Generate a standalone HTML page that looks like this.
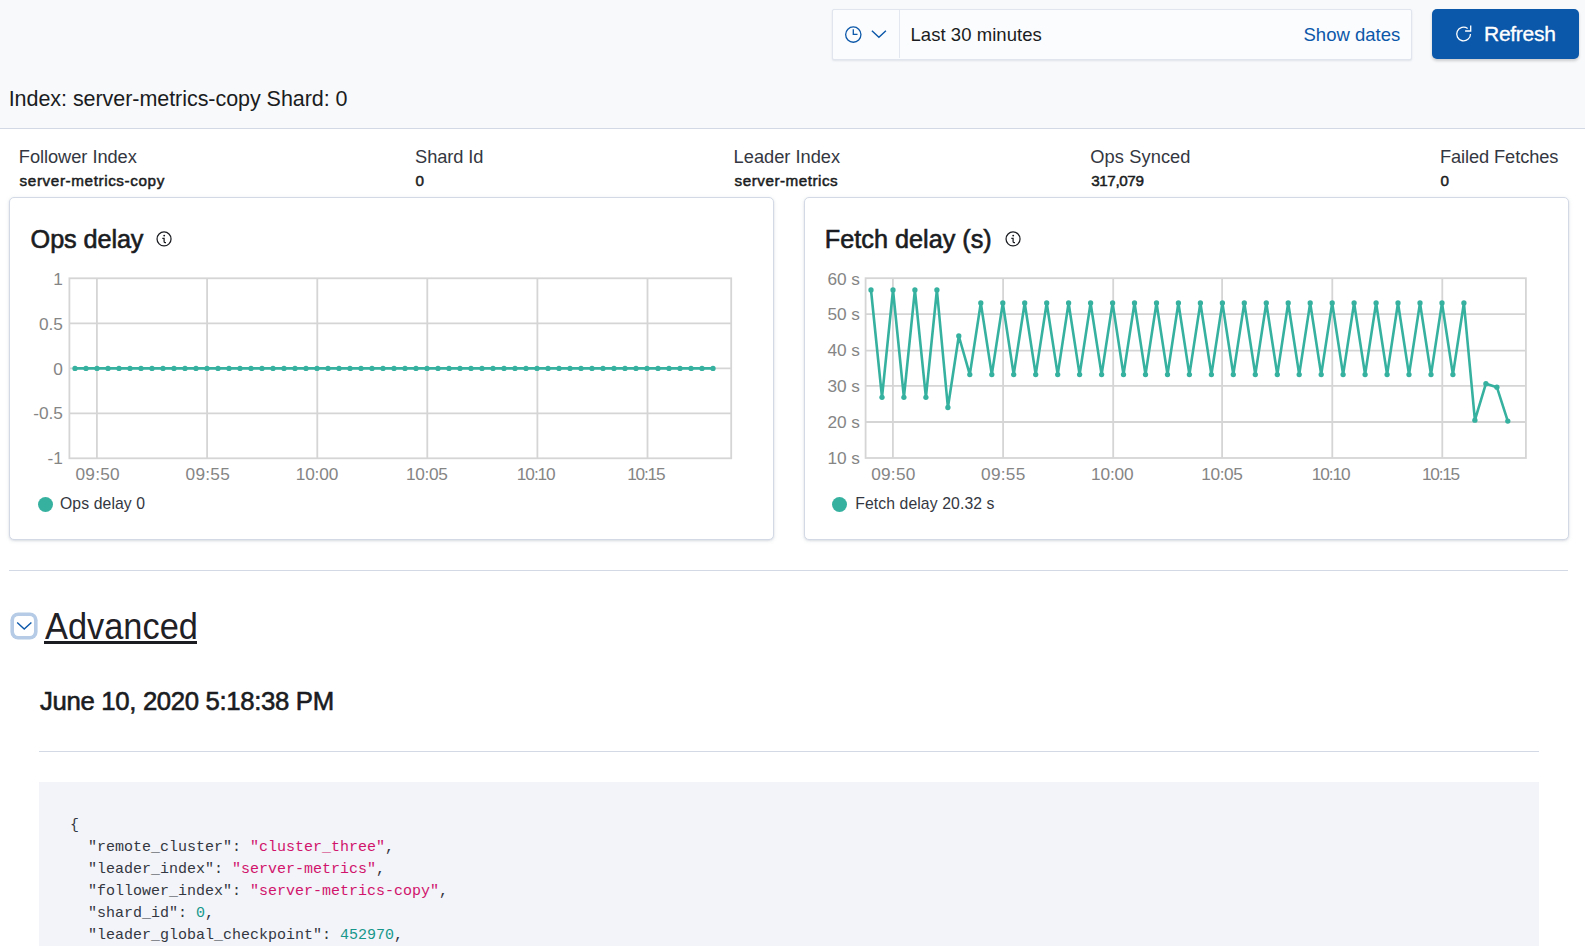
<!DOCTYPE html>
<html><head><meta charset="utf-8"><title>Follower shard</title>
<style>
html,body{margin:0;padding:0}
body{width:1585px;height:946px;overflow:hidden;position:relative;background:#fff;font-family:"Liberation Sans",sans-serif;}
.t{position:absolute;white-space:pre;line-height:1;font-family:"Liberation Sans",sans-serif}
</style></head><body>
<div style="position:absolute;left:0;top:0;width:1585px;height:128px;background:#F8F9FB;border-bottom:1px solid #D3DAE6"></div>
<div style="position:absolute;left:832px;top:9px;width:578px;height:48.5px;background:#FBFCFD;border:1px solid #E0E5EE;border-radius:2px;box-shadow:0 1px 2px rgba(152,162,179,.25)"></div>
<div style="position:absolute;left:899px;top:10px;width:1px;height:48px;background:#E3E7EF"></div>
<svg style="position:absolute;left:843px;top:24px" width="20" height="20" viewBox="0 0 20 20"><circle cx="10.3" cy="10.6" r="7.65" fill="none" stroke="#0B57A9" stroke-width="1.3"/><path d="M10.3 5.3 V10.4 H14.5" fill="none" stroke="#0B57A9" stroke-width="1.3"/></svg>
<svg style="position:absolute;left:869px;top:26px" width="20" height="16" viewBox="0 0 20 16"><path d="M2.9 4.8 L9.9 11.2 L16.9 4.8" fill="none" stroke="#0B57A9" stroke-width="1.4"/></svg>
<div class="t" style="left:910.5px;top:26.0px;font-size:18.5px;font-weight:400;letter-spacing:0.05px;color:#1A1C21;">Last 30 minutes</div>
<div class="t" style="left:1303.5px;top:26.0px;font-size:18.5px;font-weight:400;letter-spacing:0.0px;color:#0B57A9;">Show dates</div>
<div style="position:absolute;left:1432px;top:9px;width:147px;height:50px;background:#0B57A9;border-radius:5px;box-shadow:0 2px 3px rgba(0,0,0,.18)"></div>
<svg style="position:absolute;left:1453px;top:23px" width="22" height="22" viewBox="0 0 22 22"><path d="M14.66 5.42 A6.9 6.9 0 1 0 17.5 11.0" fill="none" stroke="#fff" stroke-width="1.3"/><path d="M17.7 2.5 V8.0 H12.1" fill="none" stroke="#fff" stroke-width="1.3"/></svg>
<div class="t" style="left:1484.1px;top:23.0px;font-size:21.0px;font-weight:400;letter-spacing:-0.3px;color:#fff;-webkit-text-stroke:0.35px #fff;">Refresh</div>
<div class="t" style="left:8.7px;top:89.0px;font-size:21.5px;font-weight:400;letter-spacing:-0.05px;color:#1A1C21;">Index: server-metrics-copy Shard: 0</div>
<div class="t" style="left:18.8px;top:148.0px;font-size:18.25px;font-weight:400;letter-spacing:-0.05px;color:#343741;">Follower Index</div>
<div class="t" style="left:415.1px;top:148.0px;font-size:18.25px;font-weight:400;letter-spacing:-0.1px;color:#343741;">Shard Id</div>
<div class="t" style="left:733.6px;top:148.0px;font-size:18.25px;font-weight:400;letter-spacing:0.0px;color:#343741;">Leader Index</div>
<div class="t" style="left:1090.2px;top:148.0px;font-size:18.25px;font-weight:400;letter-spacing:0.1px;color:#343741;">Ops Synced</div>
<div class="t" style="left:1440.0px;top:148.0px;font-size:18.25px;font-weight:400;letter-spacing:-0.1px;color:#343741;">Failed Fetches</div>
<div class="t" style="left:19.6px;top:173.0px;font-size:15.25px;font-weight:400;letter-spacing:0.6px;color:#1A1C21;-webkit-text-stroke:0.5px #1A1C21;">server-metrics-copy</div>
<div class="t" style="left:415.6px;top:173.0px;font-size:15.25px;font-weight:400;letter-spacing:-0.4px;color:#1A1C21;-webkit-text-stroke:0.5px #1A1C21;">0</div>
<div class="t" style="left:734.6px;top:173.0px;font-size:15.25px;font-weight:400;letter-spacing:0.5px;color:#1A1C21;-webkit-text-stroke:0.5px #1A1C21;">server-metrics</div>
<div class="t" style="left:1091.2px;top:173.0px;font-size:15.25px;font-weight:400;letter-spacing:-0.4px;color:#1A1C21;-webkit-text-stroke:0.5px #1A1C21;">317,079</div>
<div class="t" style="left:1440.5px;top:173.0px;font-size:15.25px;font-weight:400;letter-spacing:-0.4px;color:#1A1C21;-webkit-text-stroke:0.5px #1A1C21;">0</div>
<div style="position:absolute;left:9px;top:197px;width:763px;height:341px;border:1px solid #D3DAE6;border-radius:5px;background:#fff;box-shadow:0 1px 2px rgba(152,162,179,.25),0 1px 4px rgba(152,162,179,.18)"></div>
<div style="position:absolute;left:804px;top:197px;width:763px;height:341px;border:1px solid #D3DAE6;border-radius:5px;background:#fff;box-shadow:0 1px 2px rgba(152,162,179,.25),0 1px 4px rgba(152,162,179,.18)"></div>
<div class="t" style="left:30.6px;top:226.8px;font-size:25.25px;font-weight:400;letter-spacing:-0.1px;color:#1A1C21;-webkit-text-stroke:0.6px #1A1C21;">Ops delay</div>
<div class="t" style="left:824.8px;top:226.8px;font-size:25.25px;font-weight:400;letter-spacing:0.0px;color:#1A1C21;-webkit-text-stroke:0.6px #1A1C21;">Fetch delay (s)</div>
<svg style="position:absolute;left:155px;top:230px" width="18" height="18" viewBox="0 0 18 18"><circle cx="9.05" cy="8.9" r="7.0" fill="none" stroke="#1A1C21" stroke-width="1.25"/><circle cx="9.2" cy="5.6" r="0.95" fill="#1A1C21"/><path d="M7.3 8.4 H9.1 V11.6 Q9.1 12.5 10 12.5 H11" fill="none" stroke="#1A1C21" stroke-width="1.25"/></svg>
<svg style="position:absolute;left:1004px;top:230px" width="18" height="18" viewBox="0 0 18 18"><circle cx="9.05" cy="8.9" r="7.0" fill="none" stroke="#1A1C21" stroke-width="1.25"/><circle cx="9.2" cy="5.6" r="0.95" fill="#1A1C21"/><path d="M7.3 8.4 H9.1 V11.6 Q9.1 12.5 10 12.5 H11" fill="none" stroke="#1A1C21" stroke-width="1.25"/></svg>
<svg style="position:absolute;left:0;top:0" width="1585" height="946" viewBox="0 0 1585 946"><path d="M69.4 323.3 H731.2 M69.4 368.3 H731.2 M69.4 413.3 H731.2 M96.9 278.3 V458.3 M207.1 278.3 V458.3 M317.3 278.3 V458.3 M427.3 278.3 V458.3 M537.4 278.3 V458.3 M647.5 278.3 V458.3 " stroke="#D5D5D5" stroke-width="1.8" fill="none"/><rect x="69.4" y="278.3" width="661.8000000000001" height="180.0" stroke="#D5D5D5" stroke-width="1.8" fill="none"/><path d="M75.0 368.4 L86.0 368.4 L97.0 368.4 L108.0 368.4 L119.0 368.4 L130.0 368.4 L141.0 368.4 L152.0 368.4 L163.0 368.4 L174.0 368.4 L185.0 368.4 L196.0 368.4 L207.0 368.4 L218.0 368.4 L229.0 368.4 L240.0 368.4 L251.0 368.4 L262.0 368.4 L273.0 368.4 L284.0 368.4 L295.0 368.4 L306.0 368.4 L317.0 368.4 L328.0 368.4 L339.0 368.4 L350.0 368.4 L361.0 368.4 L372.0 368.4 L383.0 368.4 L394.0 368.4 L405.0 368.4 L416.0 368.4 L427.0 368.4 L438.0 368.4 L449.0 368.4 L460.0 368.4 L471.0 368.4 L482.0 368.4 L493.0 368.4 L504.0 368.4 L515.0 368.4 L526.0 368.4 L537.0 368.4 L548.0 368.4 L559.0 368.4 L570.0 368.4 L581.0 368.4 L592.0 368.4 L603.0 368.4 L614.0 368.4 L625.0 368.4 L636.0 368.4 L647.0 368.4 L658.0 368.4 L669.0 368.4 L680.0 368.4 L691.0 368.4 L702.0 368.4 L713.0 368.4" stroke="#36B1A0" stroke-width="2.6" fill="none" stroke-linejoin="miter"/><circle cx="75.0" cy="368.4" r="2.65" fill="#36B1A0"/><circle cx="86.0" cy="368.4" r="2.65" fill="#36B1A0"/><circle cx="97.0" cy="368.4" r="2.65" fill="#36B1A0"/><circle cx="108.0" cy="368.4" r="2.65" fill="#36B1A0"/><circle cx="119.0" cy="368.4" r="2.65" fill="#36B1A0"/><circle cx="130.0" cy="368.4" r="2.65" fill="#36B1A0"/><circle cx="141.0" cy="368.4" r="2.65" fill="#36B1A0"/><circle cx="152.0" cy="368.4" r="2.65" fill="#36B1A0"/><circle cx="163.0" cy="368.4" r="2.65" fill="#36B1A0"/><circle cx="174.0" cy="368.4" r="2.65" fill="#36B1A0"/><circle cx="185.0" cy="368.4" r="2.65" fill="#36B1A0"/><circle cx="196.0" cy="368.4" r="2.65" fill="#36B1A0"/><circle cx="207.0" cy="368.4" r="2.65" fill="#36B1A0"/><circle cx="218.0" cy="368.4" r="2.65" fill="#36B1A0"/><circle cx="229.0" cy="368.4" r="2.65" fill="#36B1A0"/><circle cx="240.0" cy="368.4" r="2.65" fill="#36B1A0"/><circle cx="251.0" cy="368.4" r="2.65" fill="#36B1A0"/><circle cx="262.0" cy="368.4" r="2.65" fill="#36B1A0"/><circle cx="273.0" cy="368.4" r="2.65" fill="#36B1A0"/><circle cx="284.0" cy="368.4" r="2.65" fill="#36B1A0"/><circle cx="295.0" cy="368.4" r="2.65" fill="#36B1A0"/><circle cx="306.0" cy="368.4" r="2.65" fill="#36B1A0"/><circle cx="317.0" cy="368.4" r="2.65" fill="#36B1A0"/><circle cx="328.0" cy="368.4" r="2.65" fill="#36B1A0"/><circle cx="339.0" cy="368.4" r="2.65" fill="#36B1A0"/><circle cx="350.0" cy="368.4" r="2.65" fill="#36B1A0"/><circle cx="361.0" cy="368.4" r="2.65" fill="#36B1A0"/><circle cx="372.0" cy="368.4" r="2.65" fill="#36B1A0"/><circle cx="383.0" cy="368.4" r="2.65" fill="#36B1A0"/><circle cx="394.0" cy="368.4" r="2.65" fill="#36B1A0"/><circle cx="405.0" cy="368.4" r="2.65" fill="#36B1A0"/><circle cx="416.0" cy="368.4" r="2.65" fill="#36B1A0"/><circle cx="427.0" cy="368.4" r="2.65" fill="#36B1A0"/><circle cx="438.0" cy="368.4" r="2.65" fill="#36B1A0"/><circle cx="449.0" cy="368.4" r="2.65" fill="#36B1A0"/><circle cx="460.0" cy="368.4" r="2.65" fill="#36B1A0"/><circle cx="471.0" cy="368.4" r="2.65" fill="#36B1A0"/><circle cx="482.0" cy="368.4" r="2.65" fill="#36B1A0"/><circle cx="493.0" cy="368.4" r="2.65" fill="#36B1A0"/><circle cx="504.0" cy="368.4" r="2.65" fill="#36B1A0"/><circle cx="515.0" cy="368.4" r="2.65" fill="#36B1A0"/><circle cx="526.0" cy="368.4" r="2.65" fill="#36B1A0"/><circle cx="537.0" cy="368.4" r="2.65" fill="#36B1A0"/><circle cx="548.0" cy="368.4" r="2.65" fill="#36B1A0"/><circle cx="559.0" cy="368.4" r="2.65" fill="#36B1A0"/><circle cx="570.0" cy="368.4" r="2.65" fill="#36B1A0"/><circle cx="581.0" cy="368.4" r="2.65" fill="#36B1A0"/><circle cx="592.0" cy="368.4" r="2.65" fill="#36B1A0"/><circle cx="603.0" cy="368.4" r="2.65" fill="#36B1A0"/><circle cx="614.0" cy="368.4" r="2.65" fill="#36B1A0"/><circle cx="625.0" cy="368.4" r="2.65" fill="#36B1A0"/><circle cx="636.0" cy="368.4" r="2.65" fill="#36B1A0"/><circle cx="647.0" cy="368.4" r="2.65" fill="#36B1A0"/><circle cx="658.0" cy="368.4" r="2.65" fill="#36B1A0"/><circle cx="669.0" cy="368.4" r="2.65" fill="#36B1A0"/><circle cx="680.0" cy="368.4" r="2.65" fill="#36B1A0"/><circle cx="691.0" cy="368.4" r="2.65" fill="#36B1A0"/><circle cx="702.0" cy="368.4" r="2.65" fill="#36B1A0"/><circle cx="713.0" cy="368.4" r="2.65" fill="#36B1A0"/></svg>
<svg style="position:absolute;left:0;top:0" width="1585" height="946" viewBox="0 0 1585 946"><path d="M865.6 314.2 H1525.9 M865.6 350.6 H1525.9 M865.6 385.8 H1525.9 M865.6 422.0 H1525.9 M892.9 278.2 V458.0 M1003.1 278.2 V458.0 M1113.2 278.2 V458.0 M1222.1 278.2 V458.0 M1332.3 278.2 V458.0 M1442.3 278.2 V458.0 " stroke="#D5D5D5" stroke-width="1.8" fill="none"/><rect x="865.6" y="278.2" width="660.3000000000001" height="179.8" stroke="#D5D5D5" stroke-width="1.8" fill="none"/><path d="M871.0 290.0 L882.0 397.3 L893.0 290.0 L903.9 397.3 L914.9 290.0 L925.9 397.3 L936.9 290.0 L947.9 407.5 L958.8 336.0 L969.8 374.6 L980.8 303.0 L991.8 374.6 L1002.8 303.0 L1013.7 374.6 L1024.7 303.0 L1035.7 374.6 L1046.7 303.0 L1057.7 374.6 L1068.6 303.0 L1079.6 374.6 L1090.6 303.0 L1101.6 374.6 L1112.6 303.0 L1123.5 374.6 L1134.5 303.0 L1145.5 374.6 L1156.5 303.0 L1167.5 374.6 L1178.4 303.0 L1189.4 374.6 L1200.4 303.0 L1211.4 374.6 L1222.4 303.0 L1233.3 374.6 L1244.3 303.0 L1255.3 374.6 L1266.3 303.0 L1277.3 374.6 L1288.2 303.0 L1299.2 374.6 L1310.2 303.0 L1321.2 374.6 L1332.2 303.0 L1343.1 374.6 L1354.1 303.0 L1365.1 374.6 L1376.1 303.0 L1387.1 374.6 L1398.0 303.0 L1409.0 374.6 L1420.0 303.0 L1431.0 374.6 L1442.0 303.0 L1452.9 374.6 L1463.9 303.0 L1474.9 420.2 L1485.9 383.7 L1496.9 387.2 L1507.8 421.1" stroke="#36B1A0" stroke-width="2.6" fill="none" stroke-linejoin="miter"/><circle cx="871.0" cy="290.0" r="2.65" fill="#36B1A0"/><circle cx="882.0" cy="397.3" r="2.65" fill="#36B1A0"/><circle cx="893.0" cy="290.0" r="2.65" fill="#36B1A0"/><circle cx="903.9" cy="397.3" r="2.65" fill="#36B1A0"/><circle cx="914.9" cy="290.0" r="2.65" fill="#36B1A0"/><circle cx="925.9" cy="397.3" r="2.65" fill="#36B1A0"/><circle cx="936.9" cy="290.0" r="2.65" fill="#36B1A0"/><circle cx="947.9" cy="407.5" r="2.65" fill="#36B1A0"/><circle cx="958.8" cy="336.0" r="2.65" fill="#36B1A0"/><circle cx="969.8" cy="374.6" r="2.65" fill="#36B1A0"/><circle cx="980.8" cy="303.0" r="2.65" fill="#36B1A0"/><circle cx="991.8" cy="374.6" r="2.65" fill="#36B1A0"/><circle cx="1002.8" cy="303.0" r="2.65" fill="#36B1A0"/><circle cx="1013.7" cy="374.6" r="2.65" fill="#36B1A0"/><circle cx="1024.7" cy="303.0" r="2.65" fill="#36B1A0"/><circle cx="1035.7" cy="374.6" r="2.65" fill="#36B1A0"/><circle cx="1046.7" cy="303.0" r="2.65" fill="#36B1A0"/><circle cx="1057.7" cy="374.6" r="2.65" fill="#36B1A0"/><circle cx="1068.6" cy="303.0" r="2.65" fill="#36B1A0"/><circle cx="1079.6" cy="374.6" r="2.65" fill="#36B1A0"/><circle cx="1090.6" cy="303.0" r="2.65" fill="#36B1A0"/><circle cx="1101.6" cy="374.6" r="2.65" fill="#36B1A0"/><circle cx="1112.6" cy="303.0" r="2.65" fill="#36B1A0"/><circle cx="1123.5" cy="374.6" r="2.65" fill="#36B1A0"/><circle cx="1134.5" cy="303.0" r="2.65" fill="#36B1A0"/><circle cx="1145.5" cy="374.6" r="2.65" fill="#36B1A0"/><circle cx="1156.5" cy="303.0" r="2.65" fill="#36B1A0"/><circle cx="1167.5" cy="374.6" r="2.65" fill="#36B1A0"/><circle cx="1178.4" cy="303.0" r="2.65" fill="#36B1A0"/><circle cx="1189.4" cy="374.6" r="2.65" fill="#36B1A0"/><circle cx="1200.4" cy="303.0" r="2.65" fill="#36B1A0"/><circle cx="1211.4" cy="374.6" r="2.65" fill="#36B1A0"/><circle cx="1222.4" cy="303.0" r="2.65" fill="#36B1A0"/><circle cx="1233.3" cy="374.6" r="2.65" fill="#36B1A0"/><circle cx="1244.3" cy="303.0" r="2.65" fill="#36B1A0"/><circle cx="1255.3" cy="374.6" r="2.65" fill="#36B1A0"/><circle cx="1266.3" cy="303.0" r="2.65" fill="#36B1A0"/><circle cx="1277.3" cy="374.6" r="2.65" fill="#36B1A0"/><circle cx="1288.2" cy="303.0" r="2.65" fill="#36B1A0"/><circle cx="1299.2" cy="374.6" r="2.65" fill="#36B1A0"/><circle cx="1310.2" cy="303.0" r="2.65" fill="#36B1A0"/><circle cx="1321.2" cy="374.6" r="2.65" fill="#36B1A0"/><circle cx="1332.2" cy="303.0" r="2.65" fill="#36B1A0"/><circle cx="1343.1" cy="374.6" r="2.65" fill="#36B1A0"/><circle cx="1354.1" cy="303.0" r="2.65" fill="#36B1A0"/><circle cx="1365.1" cy="374.6" r="2.65" fill="#36B1A0"/><circle cx="1376.1" cy="303.0" r="2.65" fill="#36B1A0"/><circle cx="1387.1" cy="374.6" r="2.65" fill="#36B1A0"/><circle cx="1398.0" cy="303.0" r="2.65" fill="#36B1A0"/><circle cx="1409.0" cy="374.6" r="2.65" fill="#36B1A0"/><circle cx="1420.0" cy="303.0" r="2.65" fill="#36B1A0"/><circle cx="1431.0" cy="374.6" r="2.65" fill="#36B1A0"/><circle cx="1442.0" cy="303.0" r="2.65" fill="#36B1A0"/><circle cx="1452.9" cy="374.6" r="2.65" fill="#36B1A0"/><circle cx="1463.9" cy="303.0" r="2.65" fill="#36B1A0"/><circle cx="1474.9" cy="420.2" r="2.65" fill="#36B1A0"/><circle cx="1485.9" cy="383.7" r="2.65" fill="#36B1A0"/><circle cx="1496.9" cy="387.2" r="2.65" fill="#36B1A0"/><circle cx="1507.8" cy="421.1" r="2.65" fill="#36B1A0"/></svg>
<div class="t" style="left:67.72px;top:466.0px;width:60px;text-align:center;font-size:17.25px;letter-spacing:0.25px;color:#858585">09:50</div>
<div class="t" style="left:863.42px;top:466.0px;width:60px;text-align:center;font-size:17.25px;letter-spacing:0.25px;color:#858585">09:50</div>
<div class="t" style="left:177.82px;top:466.0px;width:60px;text-align:center;font-size:17.25px;letter-spacing:0.25px;color:#858585">09:55</div>
<div class="t" style="left:973.32px;top:466.0px;width:60px;text-align:center;font-size:17.25px;letter-spacing:0.25px;color:#858585">09:55</div>
<div class="t" style="left:286.92px;top:466.0px;width:60px;text-align:center;font-size:17.25px;letter-spacing:-0.15px;color:#858585">10:00</div>
<div class="t" style="left:1082.22px;top:466.0px;width:60px;text-align:center;font-size:17.25px;letter-spacing:-0.15px;color:#858585">10:00</div>
<div class="t" style="left:396.82px;top:466.0px;width:60px;text-align:center;font-size:17.25px;letter-spacing:-0.35px;color:#858585">10:05</div>
<div class="t" style="left:1191.92px;top:466.0px;width:60px;text-align:center;font-size:17.25px;letter-spacing:-0.35px;color:#858585">10:05</div>
<div class="t" style="left:505.76px;top:466.0px;width:60px;text-align:center;font-size:17.25px;letter-spacing:-1.08px;color:#858585">10:10</div>
<div class="t" style="left:1300.66px;top:466.0px;width:60px;text-align:center;font-size:17.25px;letter-spacing:-1.08px;color:#858585">10:10</div>
<div class="t" style="left:615.78px;top:466.0px;width:60px;text-align:center;font-size:17.25px;letter-spacing:-1.23px;color:#858585">10:15</div>
<div class="t" style="left:1410.48px;top:466.0px;width:60px;text-align:center;font-size:17.25px;letter-spacing:-1.23px;color:#858585">10:15</div>
<div class="t" style="left:-17.1px;top:271.1px;width:80px;text-align:right;font-size:17.25px;letter-spacing:0px;color:#858585">1</div>
<div class="t" style="left:-17.1px;top:316.1px;width:80px;text-align:right;font-size:17.25px;letter-spacing:0px;color:#858585">0.5</div>
<div class="t" style="left:-17.1px;top:361.1px;width:80px;text-align:right;font-size:17.25px;letter-spacing:0px;color:#858585">0</div>
<div class="t" style="left:-17.1px;top:405.40000000000003px;width:80px;text-align:right;font-size:17.25px;letter-spacing:0px;color:#858585">-0.5</div>
<div class="t" style="left:-17.1px;top:450.3px;width:80px;text-align:right;font-size:17.25px;letter-spacing:0px;color:#858585">-1</div>
<div class="t" style="left:780.0px;top:271.0px;width:80px;text-align:right;font-size:17.25px;letter-spacing:0px;color:#858585">60 s</div>
<div class="t" style="left:780.0px;top:306.3px;width:80px;text-align:right;font-size:17.25px;letter-spacing:0px;color:#858585">50 s</div>
<div class="t" style="left:780.0px;top:342.3px;width:80px;text-align:right;font-size:17.25px;letter-spacing:0px;color:#858585">40 s</div>
<div class="t" style="left:780.0px;top:378.1px;width:80px;text-align:right;font-size:17.25px;letter-spacing:0px;color:#858585">30 s</div>
<div class="t" style="left:780.0px;top:413.90000000000003px;width:80px;text-align:right;font-size:17.25px;letter-spacing:0px;color:#858585">20 s</div>
<div class="t" style="left:780.0px;top:449.90000000000003px;width:80px;text-align:right;font-size:17.25px;letter-spacing:0px;color:#858585">10 s</div>
<div style="position:absolute;left:37.5px;top:496.6px;width:15px;height:15px;border-radius:50%;background:#36B1A0"></div>
<div style="position:absolute;left:832.2px;top:496.6px;width:15px;height:15px;border-radius:50%;background:#36B1A0"></div>
<div class="t" style="left:60.0px;top:495.9px;font-size:15.75px;font-weight:400;letter-spacing:0.1px;color:#343741;">Ops delay 0</div>
<div class="t" style="left:855.2px;top:496.1px;font-size:15.75px;font-weight:400;letter-spacing:0.1px;color:#343741;">Fetch delay 20.32 s</div>
<div style="position:absolute;left:9px;top:570px;width:1559px;height:1px;background:#D3DAE6"></div>
<div style="position:absolute;left:14.2px;top:615.8px;width:19.9px;height:20.1px;box-shadow:0 0 0 3.6px #B5CBE6;border-radius:4.2px;background:#fff"></div>
<svg style="position:absolute;left:14px;top:618px" width="20" height="16" viewBox="0 0 20 16"><path d="M3.2 4.6 L10.2 11 L17.4 4.5" fill="none" stroke="#0B57A9" stroke-width="1.4"/></svg>
<div class="t" style="left:44.8px;top:607.8px;font-size:37.25px;font-weight:400;letter-spacing:-1.85px;color:#1F2126;transform:scaleX(0.923);transform-origin:0 0;letter-spacing:0px;">Advanced</div>
<div style="position:absolute;left:44.2px;top:641.2px;width:153px;height:2.5px;background:#1A1C21"></div>
<div class="t" style="left:40.1px;top:688.9px;font-size:25.75px;font-weight:400;letter-spacing:-0.35px;color:#1A1C21;-webkit-text-stroke:0.6px #1A1C21;">June 10, 2020 5:18:38 PM</div>
<div style="position:absolute;left:39px;top:751px;width:1500px;height:1px;background:#D3DAE6"></div>
<div style="position:absolute;left:39px;top:782px;width:1500px;height:200px;background:#F2F4F9"></div>
<pre style="position:absolute;left:70px;top:814.8px;margin:0;font-family:'Liberation Mono',monospace;font-size:15px;line-height:22px;color:#343741"><span style="color:#343741">{</span>
<span style="color:#343741">  "remote_cluster": </span><span style="color:#D1136C">"cluster_three"</span><span style="color:#343741">,</span>
<span style="color:#343741">  "leader_index": </span><span style="color:#D1136C">"server-metrics"</span><span style="color:#343741">,</span>
<span style="color:#343741">  "follower_index": </span><span style="color:#D1136C">"server-metrics-copy"</span><span style="color:#343741">,</span>
<span style="color:#343741">  "shard_id": </span><span style="color:#17978B">0</span><span style="color:#343741">,</span>
<span style="color:#343741">  "leader_global_checkpoint": </span><span style="color:#17978B">452970</span><span style="color:#343741">,</span>
</pre>
</body></html>
